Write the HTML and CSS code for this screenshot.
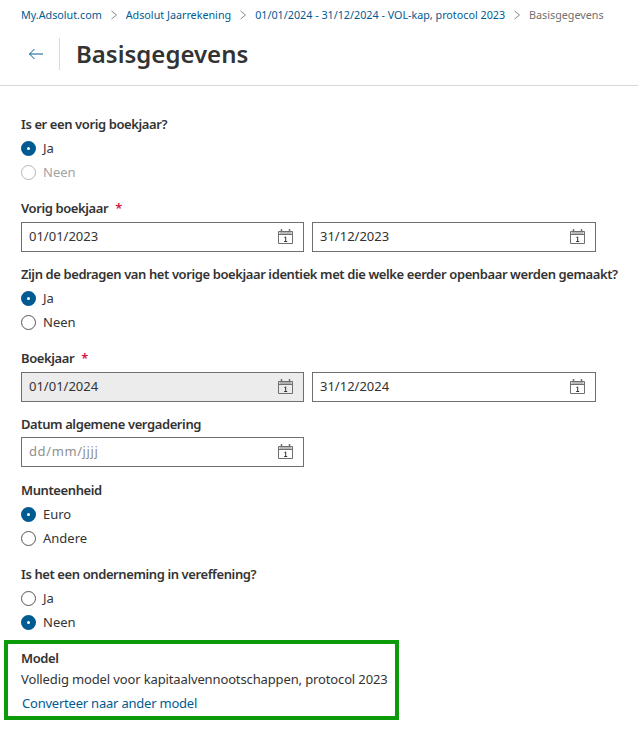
FILE: index.html
```html
<!DOCTYPE html>
<html>
<head>
  <title>Basisgegevens</title>
  <link rel="stylesheet" href="styles.css">
</head>
<body>
  <svg class="icon-defs" width="0" height="0">
    <symbol id="cal" viewBox="0 0 15 15">
      <path d="M.5 2.5h14v12H.5zM.5 5.5h14M1.5 4h12" fill="none" stroke="#6f6f6f"/>
      <path d="M3.5 0v3M11.5 0v3" fill="none" stroke="#6f6f6f" stroke-width="1.5"/>
      <path d="M6.5 8.5l1.2-.6v4.6M6.2 12.5h3" fill="none" stroke="#333"/>
    </symbol>
  </svg>

  <nav class="breadcrumb">
    <a href="#">My.Adsolut.com</a>
    <svg class="crumb-sep" viewBox="0 0 8 10"><path d="M1.5 1l5 4-5 4" fill="none" stroke="#8a8a8a"/></svg>
    <a href="#">Adsolut Jaarrekening</a>
    <svg class="crumb-sep" viewBox="0 0 8 10"><path d="M1.5 1l5 4-5 4" fill="none" stroke="#8a8a8a"/></svg>
    <a href="#">01/01/2024 - 31/12/2024 - VOL-kap, protocol 2023</a>
    <svg class="crumb-sep" viewBox="0 0 8 10"><path d="M1.5 1l5 4-5 4" fill="none" stroke="#8a8a8a"/></svg>
    <span class="crumb-current">Basisgegevens</span>
  </nav>

  <header class="page-header">
    <a class="back" href="#">
      <svg width="16" height="12" viewBox="0 0 16 12"><path d="M15 6H1.5M6.5 1L1.5 6l5 5" fill="none" stroke="#005b92"/></svg>
    </a>
    <h1>Basisgegevens</h1>
  </header>

  <main class="form">
    <section class="field first">
      <div class="label">Is er een vorig boekjaar?</div>
      <div class="radio"><span class="dot on"></span>Ja</div>
      <div class="radio disabled"><span class="dot"></span>Neen</div>
    </section>

    <section class="field">
      <div class="label">Vorig boekjaar <span class="req">*</span></div>
      <div class="date-row">
        <div class="date-input">01/01/2023<svg class="cal"><use href="#cal"/></svg></div>
        <div class="date-input">31/12/2023<svg class="cal"><use href="#cal"/></svg></div>
      </div>
    </section>

    <section class="field">
      <div class="label">Zijn de bedragen van het vorige boekjaar identiek met die welke eerder openbaar werden gemaakt?</div>
      <div class="radio"><span class="dot on"></span>Ja</div>
      <div class="radio"><span class="dot"></span>Neen</div>
    </section>

    <section class="field">
      <div class="label">Boekjaar <span class="req">*</span></div>
      <div class="date-row">
        <div class="date-input readonly">01/01/2024<svg class="cal"><use href="#cal"/></svg></div>
        <div class="date-input">31/12/2024<svg class="cal"><use href="#cal"/></svg></div>
      </div>
    </section>

    <section class="field single-date">
      <div class="label">Datum algemene vergadering</div>
      <div class="date-row">
        <div class="date-input placeholder">dd/mm/jjjj<svg class="cal"><use href="#cal"/></svg></div>
      </div>
    </section>

    <section class="field">
      <div class="label">Munteenheid</div>
      <div class="radio"><span class="dot on"></span>Euro</div>
      <div class="radio"><span class="dot"></span>Andere</div>
    </section>

    <section class="field">
      <div class="label">Is het een onderneming in vereffening?</div>
      <div class="radio"><span class="dot"></span>Ja</div>
      <div class="radio"><span class="dot on"></span>Neen</div>
    </section>

    <section class="model">
      <div class="label">Model</div>
      <div class="model-name">Volledig model voor kapitaalvennootschappen, protocol 2023</div>
      <a class="model-link" href="#">Converteer naar ander model</a>
    </section>
  </main>
</body>
</html>
```

FILE: styles.css
```css
body {
  margin: 0;
  font-family: "Noto Sans", "Open Sans", sans-serif;
  font-size: 13px;
  line-height: 18px;
  color: #333;
  background: #fff;
}

a {
  color: #005b92;
  text-decoration: none;
}

.icon-defs {
  display: block;
}

.breadcrumb {
  display: flex;
  align-items: center;
  height: 30px;
  padding-left: 21px;
  font-size: 10.75px;
  white-space: nowrap;
}

.crumb-sep {
  width: 8px;
  height: 10px;
  margin: 0 8px;
}

.crumb-current {
  color: #6f6f6f;
}

.page-header {
  box-sizing: border-box;
  display: flex;
  align-items: center;
  height: 56px;
  padding: 0 0 7px 28px;
  border-bottom: 1px solid #d9d9d9;
}

.back {
  display: flex;
  align-items: center;
  height: 32px;
  padding-right: 15px;
  border-right: 1px solid #d9d9d9;
}

.page-header h1 {
  margin: 0 0 0 16px;
  font-size: 24px;
  line-height: 32px;
  font-weight: 600;
  color: #333;
}

.form {
  padding-left: 21px;
}

.field {
  padding-top: 13px;
}

.field.first {
  padding-top: 29px;
}

.field.single-date {
  padding-bottom: 1px;
}

.label {
  font-size: 13px;
  line-height: 18px;
  font-weight: 600;
  letter-spacing: -0.4px;
  color: #333;
  white-space: nowrap;
}

.req {
  color: #d5143c;
  margin-left: 4px;
}

.radio {
  display: flex;
  align-items: center;
  gap: 7px;
  height: 24px;
}

.label + .radio {
  margin-top: 3px;
}

.radio + .radio {
  margin-bottom: 2px;
}

.dot {
  box-sizing: border-box;
  width: 15px;
  height: 15px;
  border: 1px solid #555;
  border-radius: 50%;
  background: #fff;
}

.dot.on {
  border: 6.5px solid #005b92;
}

.radio.disabled {
  color: #a3a3a3;
}

.radio.disabled .dot {
  border-color: #b5b5b5;
}

.date-row {
  display: grid;
  grid-template-columns: 283px 284px;
  gap: 8px;
  margin-top: 5px;
}

.single-date .date-row {
  margin-top: 4px;
}

.date-input {
  box-sizing: border-box;
  display: flex;
  align-items: center;
  justify-content: space-between;
  height: 30px;
  padding: 0 10px 2px 7px;
  border: 1px solid #6f6f6f;
  background: #fff;
}

.date-input.readonly {
  background: #ececec;
}

.date-input.placeholder {
  color: #8f8f8f;
  letter-spacing: 0.6px;
}

.cal {
  width: 15px;
  height: 15px;
}

.model {
  box-sizing: border-box;
  width: 395px;
  height: 80px;
  margin: 6px 0 0 -17px;
  padding: 5px 0 0 13px;
  border: 4px solid #0a9a0a;
}

.model-name {
  margin-top: 3px;
  letter-spacing: -0.13px;
  white-space: nowrap;
}

.model-link {
  display: block;
  margin: 6px 0 0 1px;
  letter-spacing: -0.22px;
}
```
